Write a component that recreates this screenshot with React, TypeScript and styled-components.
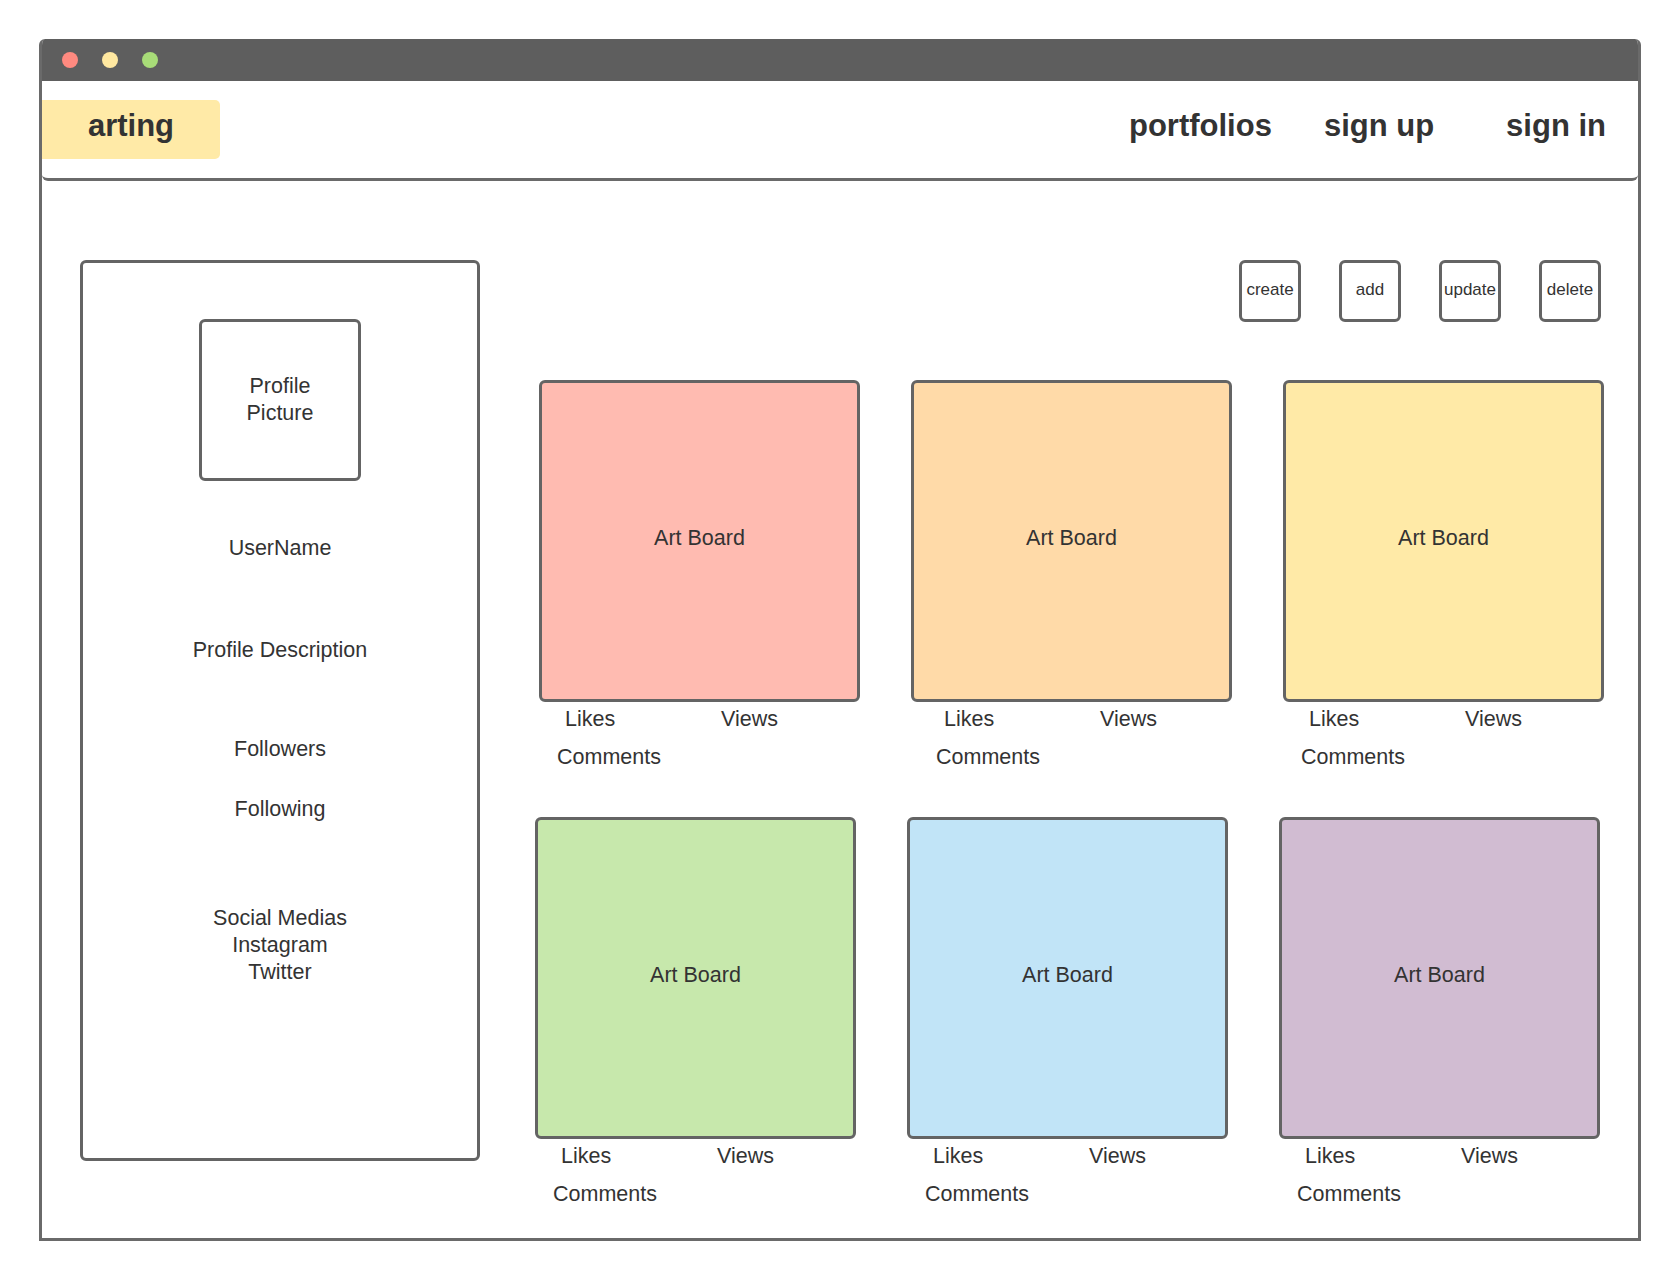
import React from "react";
import styled, { createGlobalStyle } from "styled-components";

const GlobalStyle = createGlobalStyle`
  body {
    margin: 0;
    background: #fff;
    color: #333;
    font-family: "Liberation Sans", Arial, sans-serif;
  }
`;

// colour + small offset of the stat labels (the mockup is a bit uneven)
const topRow = [
  { color: "#ffbbb1", dx: 0 },
  { color: "#ffdaa8", dx: 7 },
  { color: "#ffeaa7", dx: 0 },
];

const bottomRow = [
  { color: "#c7e8ac", dx: 0 },
  { color: "#c1e4f7", dx: 0 },
  { color: "#d1bcd2", dx: 0 },
];

type Board = { color: string; dx: number };

const ArtCard = ({ board }: { board: Board }) => (
  <Card>
    <ArtBox $color={board.color}>Art Board</ArtBox>
    <StatRow $dx={board.dx}>
      <Stat>Likes</Stat>
      <Stat>Views</Stat>
    </StatRow>
    <Comments $dx={board.dx}>Comments</Comments>
  </Card>
);

const App = () => {
  return (
    <>
      <GlobalStyle />
      <Window>
        {/* title bar */}
        <TitleBar>
          <Dot $color="#ff8a80" />
          <Dot $color="#ffe8a0" />
          <Dot $color="#a8dc78" />
        </TitleBar>

        {/* header */}
        <Header>
          <Logo>arting</Logo>
          <Nav>
            <NavLink>portfolios</NavLink>
            <NavLink $ml={52}>sign up</NavLink>
            <NavLink $ml={72}>sign in</NavLink>
          </Nav>
        </Header>

        <Content>
          {/* profile column */}
          <Sidebar>
            <ProfilePic>
              Profile
              <br />
              Picture
            </ProfilePic>
            <SideText $mt={54}>UserName</SideText>
            <SideText $mt={75}>Profile Description</SideText>
            <SideText $mt={72}>Followers</SideText>
            <SideText $mt={33}>Following</SideText>
            <SideText $mt={82}>
              Social Medias
              <br />
              Instagram
              <br />
              Twitter
            </SideText>
          </Sidebar>

          {/* boards */}
          <Main>
            <Toolbar>
              <ToolButton>create</ToolButton>
              <ToolButton>add</ToolButton>
              <ToolButton>update</ToolButton>
              <ToolButton>delete</ToolButton>
            </Toolbar>

            <Rows>
              <CardRow>
                {topRow.map((b, i) => (
                  <ArtCard key={i} board={b} />
                ))}
              </CardRow>
              <CardRow $shift={-4}>
                {bottomRow.map((b, i) => (
                  <ArtCard key={i} board={b} />
                ))}
              </CardRow>
            </Rows>
          </Main>
        </Content>
      </Window>
    </>
  );
};

// window frame
const Window = styled.div`
  box-sizing: border-box;
  margin: 39px 0 0 39px;
  width: 1602px;
  height: 1202px;
  border: 3px solid #6a6a6a;
  border-top: none;
  border-radius: 6px 6px 0 0;
  overflow: hidden;
`;

const TitleBar = styled.div`
  height: 42px;
  background: #5e5e5e;
  display: flex;
  align-items: flex-start;
  gap: 24px;
  padding: 13px 0 0 20px;
  box-sizing: border-box;
`;

const Dot = styled.span<{ $color: string }>`
  width: 16px;
  height: 16px;
  border-radius: 50%;
  background: ${(p) => p.$color};
`;

// header
const Header = styled.header`
  height: 100px;
  box-sizing: border-box;
  border-bottom: 3px solid #6a6a6a;
  border-radius: 0 0 6px 6px;
  display: flex;
  align-items: flex-start;
  font-family: "Liberation Sans", Arial, sans-serif;
  font-weight: 700;
  font-size: 31px;
  color: #333;
`;

const Logo = styled.div`
  margin-top: 19px;
  width: 178px;
  height: 59px;
  box-sizing: border-box;
  padding-top: 6px;
  line-height: 40px;
  text-align: center;
  background: #ffeaa7;
  border-radius: 0 5px 5px 0;
`;

const Nav = styled.nav`
  margin: 25px 0 0 auto;
  padding-right: 32px;
  display: flex;
`;

const NavLink = styled.span<{ $ml?: number }>`
  line-height: 40px;
  margin-left: ${(p) => p.$ml || 0}px;
`;

// content
const Content = styled.div`
  display: flex;
  align-items: flex-start;
  padding: 79px 0 0 38px;
`;

const Sidebar = styled.aside`
  box-sizing: border-box;
  width: 400px;
  height: 901px;
  border: 3px solid #646464;
  border-radius: 6px;
  display: flex;
  flex-direction: column;
  align-items: center;
  padding-top: 56px;
`;

const ProfilePic = styled.div`
  box-sizing: border-box;
  width: 162px;
  height: 162px;
  border: 3px solid #646464;
  border-radius: 6px;
  display: flex;
  align-items: center;
  justify-content: center;
  text-align: center;
  font-size: 21.5px;
  line-height: 27px;
`;

const SideText = styled.div<{ $mt: number }>`
  margin-top: ${(p) => p.$mt}px;
  font-size: 21.5px;
  line-height: 27px;
  text-align: center;
`;

const Main = styled.main`
  margin-left: 59px;
  width: 1065px;
`;

const Toolbar = styled.div`
  display: flex;
  justify-content: flex-end;
  gap: 38px;
  padding-right: 3px;
`;

const ToolButton = styled.button`
  box-sizing: border-box;
  width: 62px;
  height: 62px;
  padding: 0 0 3px;
  background: #fff;
  border: 3px solid #646464;
  border-radius: 6px;
  font-family: "Liberation Sans", Arial, sans-serif;
  font-size: 17px;
  color: #333;
  white-space: nowrap;
  display: flex;
  align-items: center;
  justify-content: center;
`;

const Rows = styled.div`
  margin-top: 58px;
  display: flex;
  flex-direction: column;
  gap: 46px;
`;

const CardRow = styled.div<{ $shift?: number }>`
  display: grid;
  grid-template-columns: repeat(3, 321px);
  column-gap: 51px;
  margin-left: ${(p) => p.$shift || 0}px;
`;

const Card = styled.div`
  display: flex;
  flex-direction: column;
`;

const ArtBox = styled.div<{ $color: string }>`
  box-sizing: border-box;
  width: 321px;
  height: 322px;
  background: ${(p) => p.$color};
  border: 3px solid #646464;
  border-radius: 6px;
  display: flex;
  align-items: center;
  justify-content: center;
  padding-bottom: 6px;
  font-size: 21.5px;
`;

const StatRow = styled.div<{ $dx: number }>`
  display: grid;
  grid-template-columns: 156px auto;
  padding-left: ${(p) => 26 + p.$dx}px;
  margin-top: 4px;
`;

const Stat = styled.span`
  font-size: 21.5px;
  line-height: 27px;
`;

const Comments = styled.div<{ $dx: number }>`
  padding-left: ${(p) => 18 + p.$dx}px;
  margin-top: 11px;
  font-size: 21.5px;
  line-height: 27px;
`;

export default App;
